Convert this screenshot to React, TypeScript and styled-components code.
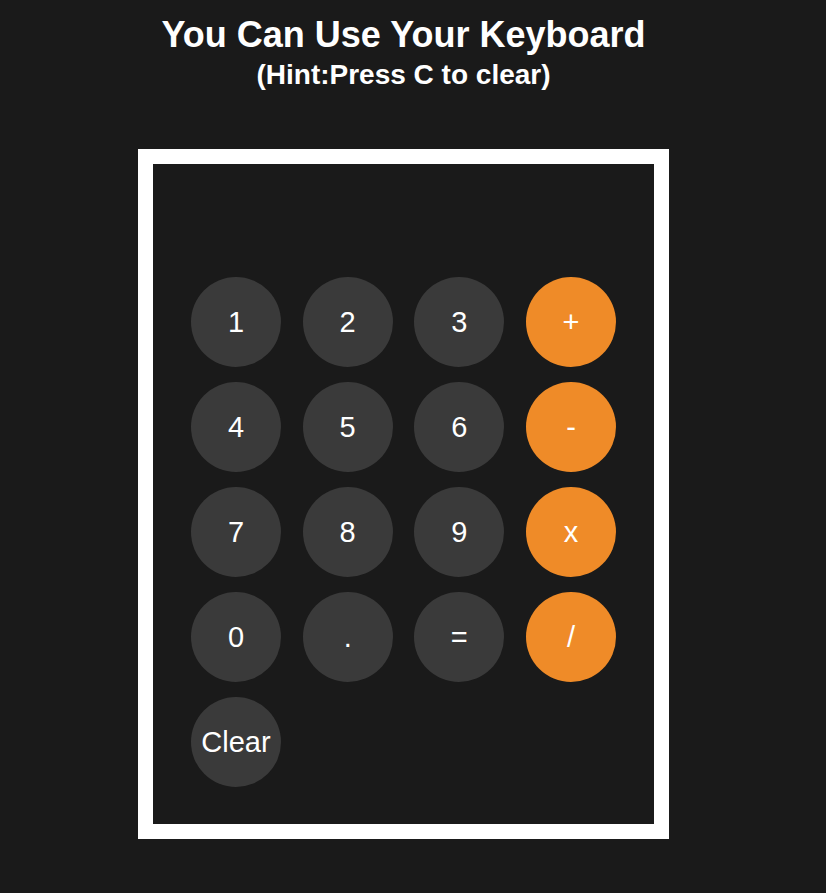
import React, { useEffect, useState, useCallback } from "react";
import styled, { createGlobalStyle } from "styled-components";

const GlobalStyle = createGlobalStyle`
  html, body {
    margin: 0;
    padding: 0;
    background: #1a1a1a;
  }
  body {
    font-family: "Liberation Sans", Arial, sans-serif;
    color: #ffffff;
  }
`;

const Page = styled.div`
  width: 807px;
  display: flex;
  flex-direction: column;
  align-items: center;
  padding-top: 14px;
  padding-bottom: 54px;
`;

const Title = styled.h1`
  margin: 0;
  font-size: 36px;
  line-height: 41px;
  font-weight: 700;
  text-align: center;
`;

const Hint = styled.h3`
  margin: 4px 0 0;
  font-size: 28px;
  line-height: 32px;
  font-weight: 700;
  text-align: center;
`;

const Frame = styled.div`
  margin-top: 58px;
  width: 425px;
  border: 15px solid #ffffff;
  background: #1a1a1a;
  padding: 38px 38px 37px;
  box-sizing: content-box;
  display: flex;
  flex-direction: column;
  gap: 15px;
`;

const Display = styled.div`
  height: 60px;
  display: flex;
  align-items: center;
  justify-content: flex-end;
  font-size: 40px;
  color: #ffffff;
  overflow: hidden;
  white-space: nowrap;
`;

const Keys = styled.div`
  display: grid;
  grid-template-columns: repeat(4, 90px);
  grid-auto-rows: 90px;
  justify-content: space-between;
  row-gap: 15px;
`;

const Key = styled.button<{ $op?: boolean }>`
  width: 90px;
  height: 90px;
  border: none;
  border-radius: 50%;
  padding: 0;
  background: ${(p) => (p.$op ? "#ef8b28" : "#3a3a3a")};
  color: #ffffff;
  font-family: "Liberation Sans", Arial, sans-serif;
  font-size: 29px;
  cursor: pointer;
  display: flex;
  align-items: center;
  justify-content: center;
  outline: none;
`;

const keys: { label: string; value: string; op?: boolean }[] = [
  { label: "1", value: "1" },
  { label: "2", value: "2" },
  { label: "3", value: "3" },
  { label: "+", value: "+", op: true },
  { label: "4", value: "4" },
  { label: "5", value: "5" },
  { label: "6", value: "6" },
  { label: "-", value: "-", op: true },
  { label: "7", value: "7" },
  { label: "8", value: "8" },
  { label: "9", value: "9" },
  { label: "x", value: "*", op: true },
  { label: "0", value: "0" },
  { label: ".", value: "." },
  { label: "=", value: "=" },
  { label: "/", value: "/", op: true },
  { label: "Clear", value: "C" },
];

export default function App() {
  const [expr, setExpr] = useState("");

  const press = useCallback((v: string) => {
    if (v === "C") {
      setExpr("");
      return;
    }
    if (v === "=") {
      setExpr((e) => {
        try {
          if (!/^[0-9+\-*/.]+$/.test(e)) return e;
          // eslint-disable-next-line no-new-func
          const r = Function(`"use strict";return (${e})`)();
          return String(r);
        } catch {
          return e;
        }
      });
      return;
    }
    setExpr((e) => e + v);
  }, []);

  useEffect(() => {
    const onKey = (ev: KeyboardEvent) => {
      const k = ev.key;
      if (/^[0-9.+\-*/]$/.test(k)) press(k);
      else if (k === "x" || k === "X") press("*");
      else if (k === "Enter" || k === "=") press("=");
      else if (k === "c" || k === "C") press("C");
    };
    window.addEventListener("keydown", onKey);
    return () => window.removeEventListener("keydown", onKey);
  }, [press]);

  return (
    <>
      <GlobalStyle />
      <Page>
        <Title>You Can Use Your Keyboard</Title>
        <Hint>(Hint:Press C to clear)</Hint>
        <Frame>
          <Display>{expr.replace(/\*/g, "x")}</Display>
          <Keys>
            {keys.map((k) => (
              <Key key={k.label} $op={k.op} onClick={() => press(k.value)}>
                {k.label}
              </Key>
            ))}
          </Keys>
        </Frame>
      </Page>
    </>
  );
}
